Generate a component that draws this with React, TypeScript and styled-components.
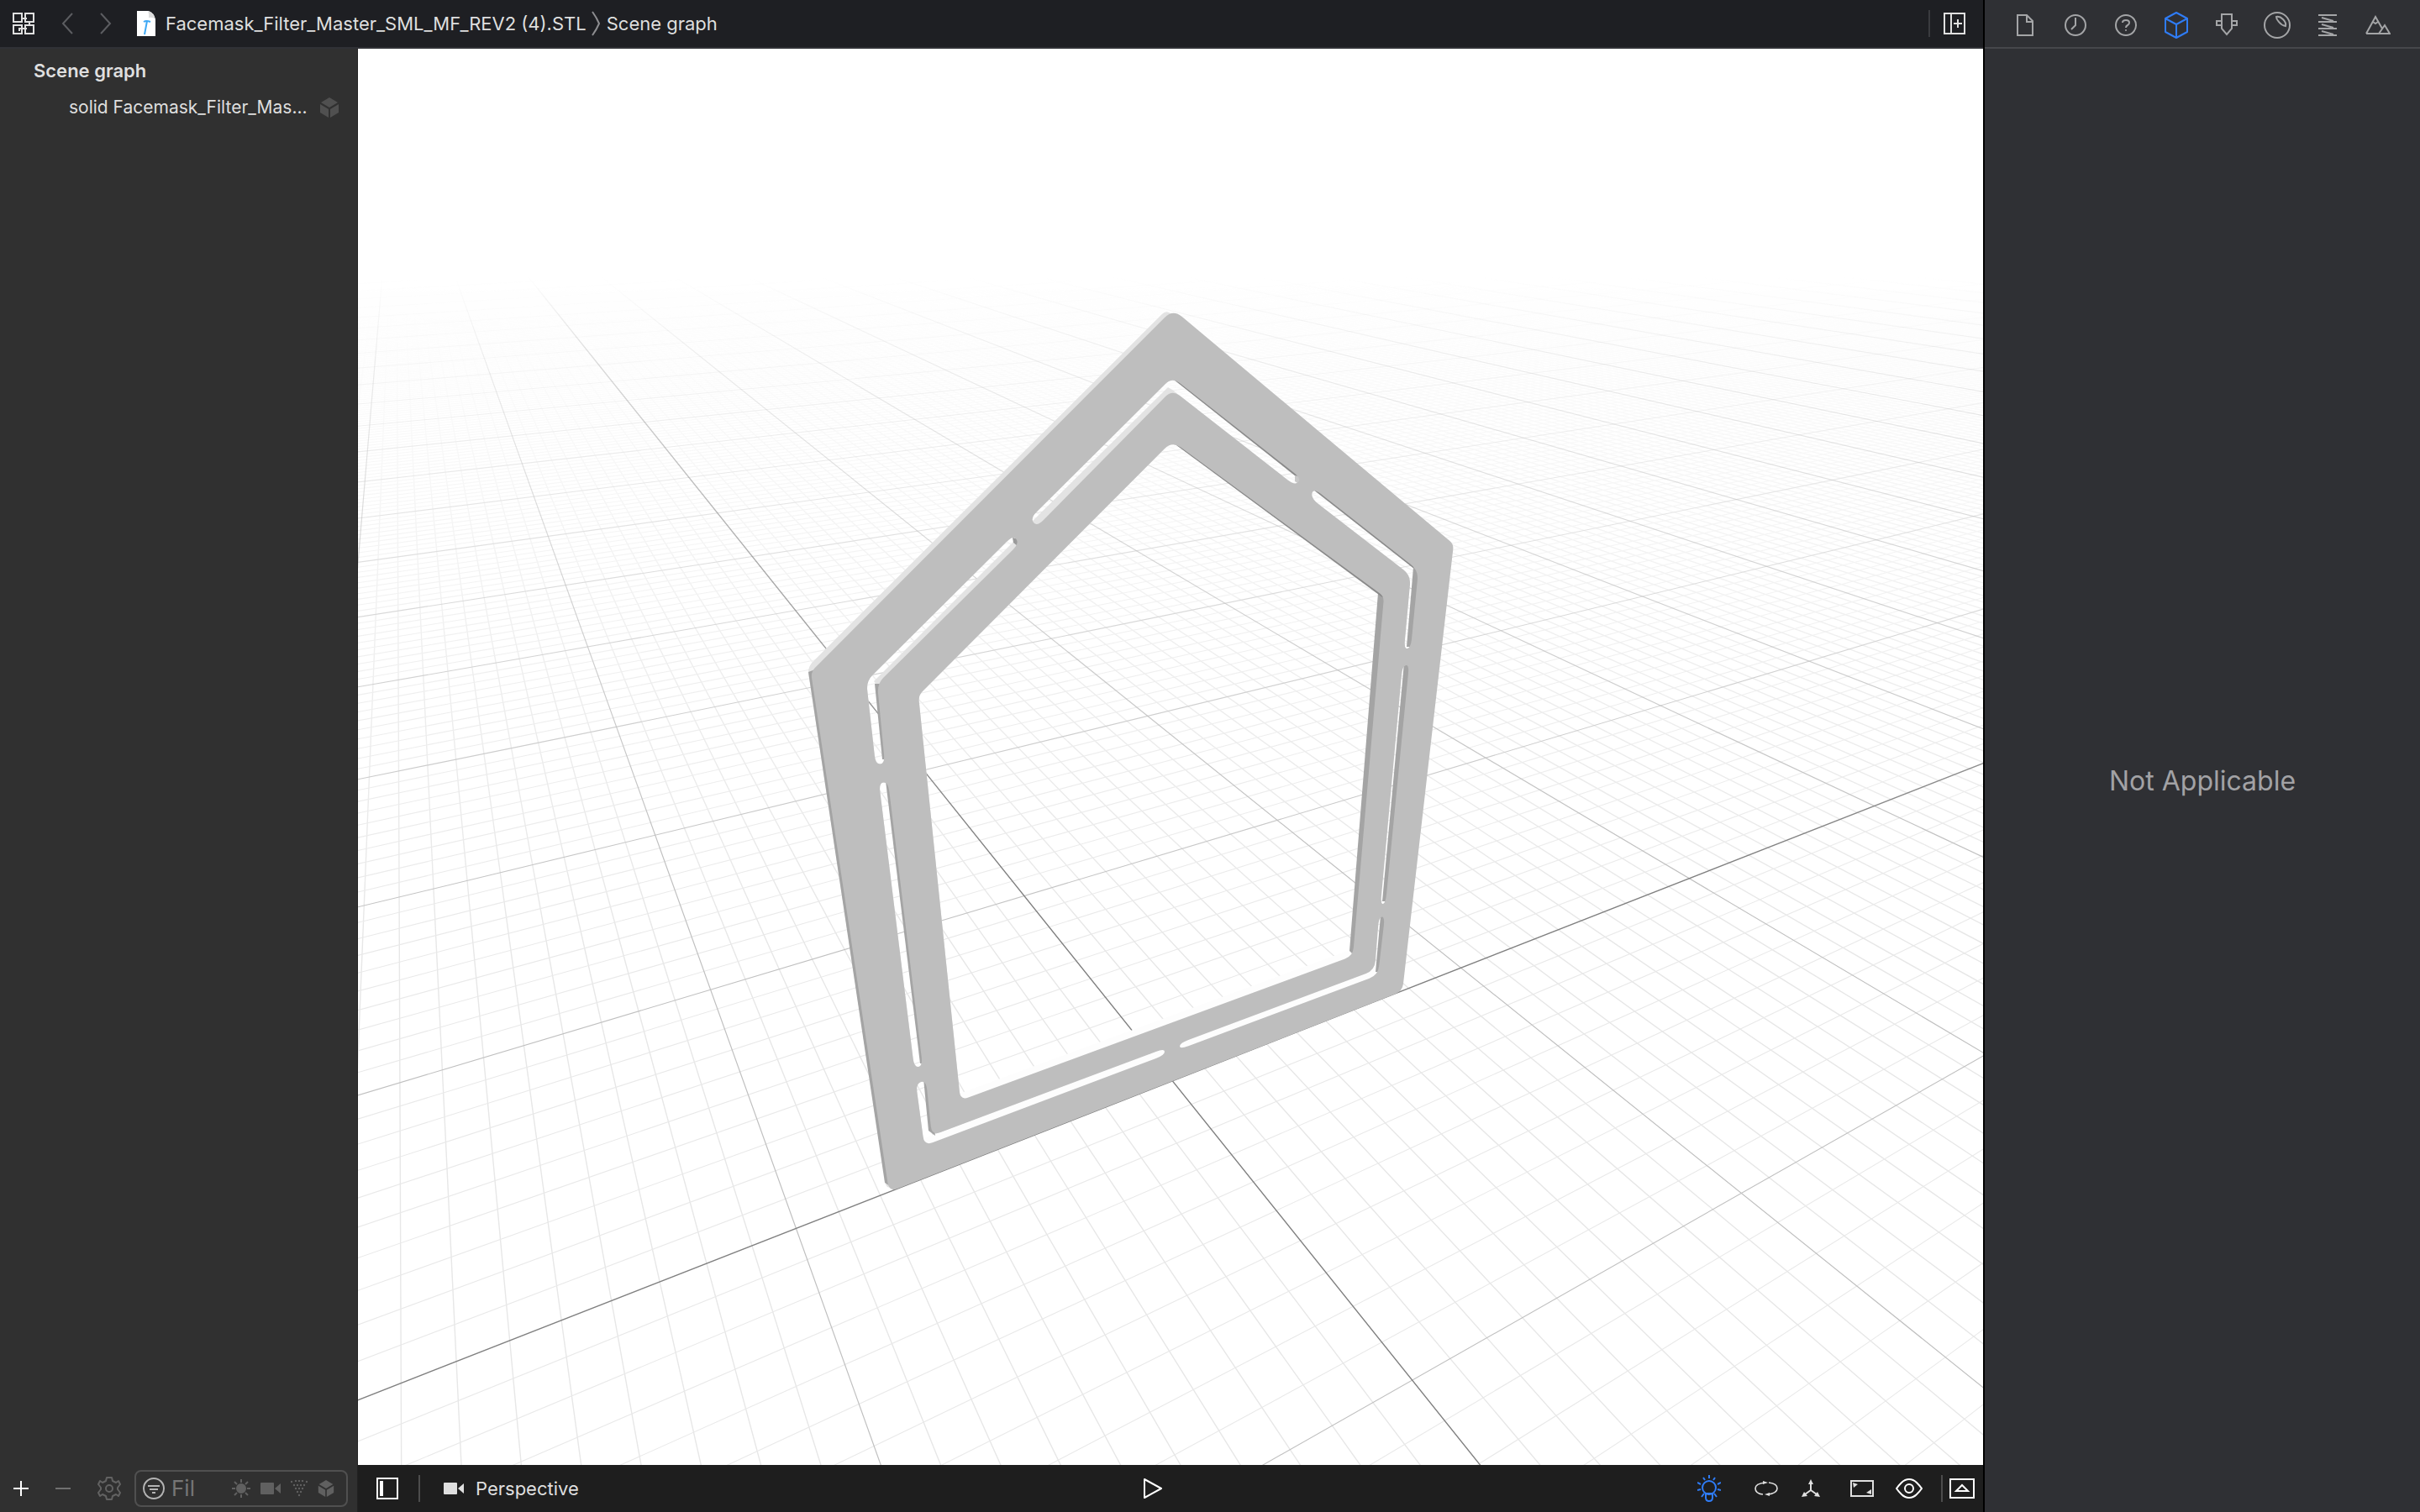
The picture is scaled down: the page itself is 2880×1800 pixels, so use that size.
import React from "react";
import styled, { createGlobalStyle } from "styled-components";

/* ---------- styles ---------- */

const GlobalStyle = createGlobalStyle`
  * { box-sizing: border-box; }
  html, body, #root { height: 100%; }
  body {
    margin: 0;
    background: #2f3034;
    color: #dfdfdf;
    font-family: Inter, "Liberation Sans", sans-serif;
    font-size: 22px;
    line-height: 32px;
  }
`;

const Shell = styled.div`
  display: flex;
  min-height: 100vh;
`;

const Editor = styled.div`
  flex: 1;
  min-width: 0;
  display: flex;
  flex-direction: column;
`;

const TopBar = styled.header`
  display: flex;
  align-items: center;
  height: 58px;
  padding: 0 21px 0 15px;
  background: #1e1f23;
  border-bottom: 2px solid #303136;
`;

const IconButton = styled.button<{ $tone?: string; $before?: number }>`
  display: flex;
  align-items: center;
  justify-content: center;
  flex: none;
  margin: 0 0 0 ${(p) => p.$before ?? 0}px;
  padding: 0;
  border: 0;
  background: none;
  color: ${(p) => p.$tone ?? "#e0e0e0"};
  cursor: pointer;
`;

const Breadcrumb = styled.nav`
  display: flex;
  align-items: center;
  gap: 6px;
  margin-left: 30px;
  flex: 1;
`;

const Crumb = styled.a`
  display: flex;
  align-items: center;
  gap: 12px;
  color: #dfdfdf;
  text-decoration: none;
  white-space: nowrap;
`;

const Divider = styled.span<{ $tone?: string }>`
  flex: none;
  width: 2px;
  height: 32px;
  background: ${(p) => p.$tone ?? "#4c4c4c"};
`;

const Workspace = styled.div`
  flex: 1;
  display: flex;
  min-height: 0;
`;

const Sidebar = styled.aside`
  width: 426px;
  flex: none;
  display: flex;
  flex-direction: column;
  background: #303030;
  border-right: 1px solid #222222;
`;

const GraphTitle = styled.h1`
  margin: 10px 0 12px 40px;
  font-size: 22px;
  line-height: 32px;
  font-weight: 600;
`;

const GraphList = styled.ul`
  flex: 1;
  margin: 0;
  padding: 0;
  list-style: none;
`;

const GraphRow = styled.li`
  display: flex;
  align-items: center;
  justify-content: space-between;
  padding: 0 22px 0 82px;
  color: #dfdfdf;
  font-size: 21px;
  white-space: nowrap;
`;

const SidebarFooter = styled.div`
  display: flex;
  align-items: center;
  height: 56px;
  padding: 0 11px 0 16px;
`;

const FilterBox = styled.label`
  display: flex;
  align-items: center;
  flex: 1;
  height: 44px;
  margin-left: 16px;
  padding: 0 14px 0 8px;
  border: 2px solid #505050;
  border-radius: 8px;
  color: #b4b4b4;
`;

const FilterInput = styled.input`
  flex: 1;
  min-width: 0;
  width: 0;
  margin: 0 0 0 8px;
  padding: 0;
  border: 0;
  outline: 0;
  background: none;
  color: #dfdfdf;
  font-family: inherit;
  font-size: 26px;
  line-height: 32px;
  &::placeholder { color: #767676; opacity: 1; }
`;

const FilterKinds = styled.span`
  display: flex;
  align-items: center;
  gap: 12px;
`;

const Viewer = styled.main`
  flex: 1;
  min-width: 0;
  display: flex;
  flex-direction: column;
`;

const Viewport = styled.div`
  flex: 1;
  min-height: 0;
  background: #ffffff;
  overflow: hidden;
`;

const SceneSvg = styled.svg`
  display: block;
  width: 100%;
  height: 100%;
`;

const ViewerBar = styled.footer`
  display: flex;
  align-items: center;
  height: 56px;
  background: #1e1e1e;
`;

const ViewerTools = styled.div`
  flex: 1;
  display: grid;
  grid-template-columns: 1fr auto 1fr;
  align-items: center;
  padding-left: 8px;
`;

const LeadTools = styled.div`
  display: flex;
  align-items: center;
  gap: 24px;
  padding-left: 14px;
`;

const CameraButton = styled.button`
  display: flex;
  align-items: center;
  gap: 14px;
  margin: 0 0 0 4px;
  padding: 0;
  border: 0;
  background: none;
  color: #dfdfdf;
  font: inherit;
  cursor: pointer;
`;

const TrailTools = styled.div`
  display: flex;
  align-items: center;
  justify-content: flex-end;
  padding-right: 22px;
`;

const DebugTools = styled.div`
  display: flex;
  align-items: center;
  gap: 8px;
  padding-right: 10px;
`;

const Inspector = styled.aside`
  width: 520px;
  flex: none;
  display: flex;
  flex-direction: column;
  background: #2f3034;
  border-left: 2px solid #000000;
`;

const InspectorTabs = styled.nav`
  display: grid;
  grid-template-columns: repeat(8, 60px);
  align-items: center;
  height: 58px;
  padding: 4px 0 0 18px;
  border-bottom: 2px solid #46474b;
`;

const EmptyState = styled.p`
  flex: 1;
  display: flex;
  align-items: center;
  justify-content: center;
  margin: 0;
  padding-top: 2px;
  color: #a2a2a5;
  font-size: 32px;
  line-height: 40px;
`;

const Glyph = styled.svg`
  display: block;
  flex: none;
  fill: none;
  stroke: currentColor;
  stroke-width: 2;
`;

/* ---------- icons ---------- */

type IconProps = { w: number; h: number; children: React.ReactNode };

const Icon = ({ w, h, children }: IconProps) => (
  <Glyph width={w} height={h} viewBox={`0 0 ${w} ${h}`} aria-hidden="true">
    {children}
  </Glyph>
);

const RelatedIcon = () => (
  <Icon w={26} h={26}>
    <path d="M1 1H11V11H1ZM15 1H25V11H15ZM1 15H11V25H1ZM15 15H25V25H15Z" />
    <path d="M11 7H17M20 10V16M9 19H17M8 18V22" />
  </Icon>
);

const BackIcon = () => (
  <Icon w={14} h={26}>
    <path d="M13 1L2 13L13 25" />
  </Icon>
);

const ForwardIcon = () => (
  <Icon w={14} h={26}>
    <path d="M1 1L12 13L1 25" />
  </Icon>
);

const FileIcon = () => (
  <Icon w={22} h={30}>
    <path d="M0 0H14Q20 2 22 10V30H0Z" fill="#ffffff" stroke="none" />
    <path d="M13 0Q15 4 14 8Q19 7 22 10Q20 2 13 0Z" fill="#dcdcdc" stroke="none" />
    <path d="M9 28L12 12M8 13Q11 11 16 13" stroke="#3fa9f5" />
  </Icon>
);

const CrumbArrow = () => (
  <Icon w={12} h={30}>
    <path d="M1 1Q6 8 9 15Q6 22 1 29" stroke="#8d8d90" />
  </Icon>
);

const AddEditorIcon = () => (
  <Icon w={26} h={26}>
    <path d="M1 1H25V25H1ZM9 1V25M12 13H22M17 8V18" />
  </Icon>
);

const DocIcon = () => (
  <Icon w={20} h={26}>
    <path d="M1 1H12L19 8V25H1ZM12 1V9H19" />
  </Icon>
);

const ClockIcon = () => (
  <Icon w={26} h={26}>
    <circle cx="13" cy="13" r="12" />
    <path d="M13 4V13L8 18" />
  </Icon>
);

const HelpIcon = () => (
  <Icon w={26} h={26}>
    <circle cx="13" cy="13" r="12" />
    <path d="M9 10Q9 7 13 7Q17 7 17 10Q17 12 15 13Q13 14 13 16" />
    <circle cx="13" cy="19" r="1" fill="currentColor" stroke="none" />
  </Icon>
);

const CubeIcon = () => (
  <Icon w={30} h={34}>
    <path d="M15 2L28 9V25L15 32L2 25V9ZM2 9L15 16L28 9M15 16V32" strokeLinejoin="round" />
  </Icon>
);

const PlugIcon = () => (
  <Icon w={26} h={28}>
    <path d="M7 1H19V18L13 25L7 18ZM7 9H1V14H7M19 9H25V14H19" />
  </Icon>
);

const SphereIcon = () => (
  <Icon w={32} h={32}>
    <circle cx="16" cy="16" r="15" />
    <path d="M15 6Q19 5 23 9Q27 13 26 17Q21 16 18 12Q15 9 15 6Z" />
  </Icon>
);

const SpringIcon = () => (
  <Icon w={22} h={26}>
    <path d="M0 1H22M4 4L18 8M0 9H22M4 12L18 16M0 17H22M4 20L18 24M0 25H22" />
  </Icon>
);

const MountainIcon = () => (
  <Icon w={30} h={24}>
    <path d="M1 22L12 2L20 16M16 22L23 12L29 22ZM1 22H18M9 8L12 10L15 8" />
  </Icon>
);

const SolidCube = ({ w, h }: { w: number; h: number }) => (
  <Glyph width={w} height={h} viewBox="0 0 22 24" aria-hidden="true">
    <g fill="currentColor" stroke="none">
      <path d="M11 0L21 6L11 12L1 6Z" />
      <path d="M0 8L10 14V24L0 18Z" />
      <path d="M22 8L12 14V24L22 18Z" />
    </g>
  </Glyph>
);

const PlusIcon = () => (
  <Icon w={18} h={18}>
    <path d="M0 9H18M9 0V18" />
  </Icon>
);

const MinusIcon = () => (
  <Icon w={18} h={18}>
    <path d="M0 9H18" />
  </Icon>
);

const GearIcon = () => (
  <Icon w={28} h={28}>
    <path
      d="M14 1H17L18 5L22 7L25 5L27 9L24 13V15L27 19L25 23L22 21L18 23L17 27H11L10 23L6 21L3 23L1 19L4 15V13L1 9L3 5L6 7L10 5L11 1Z"
      strokeLinejoin="round"
    />
    <circle cx="14" cy="14" r="4" />
  </Icon>
);

const FilterIcon = () => (
  <Icon w={26} h={26}>
    <circle cx="13" cy="13" r="12" />
    <path d="M6 10H20M8 14H18M11 18H15" />
  </Icon>
);

const SunIcon = () => (
  <Icon w={22} h={22}>
    <circle cx="11" cy="11" r="5" fill="currentColor" />
    <path d="M11 0V4M11 18V22M0 11H4M18 11H22M3 3L6 6M16 16L19 19M19 3L16 6M6 16L3 19" />
  </Icon>
);

const CameraIcon = () => (
  <Icon w={24} h={14}>
    <g fill="currentColor" stroke="none">
      <rect x="0" y="0" width="16" height="14" rx="1" />
      <path d="M17 7L24 1V13Z" />
    </g>
  </Icon>
);

const ParticlesIcon = () => (
  <Icon w={20} h={20}>
    <g fill="currentColor" stroke="none">
      {[
        [1, 2], [6, 1], [10, 1], [14, 1], [19, 2],
        [4, 6], [8, 6], [12, 6], [16, 6],
        [6, 10], [10, 10], [14, 10],
        [8, 14], [12, 14], [10, 18],
      ].map(([x, y]) => (
        <circle key={`${x}-${y}`} cx={x} cy={y} r="1.2" />
      ))}
    </g>
  </Icon>
);

const PanelIcon = () => (
  <Icon w={26} h={26}>
    <path d="M1 1H25V25H1Z" />
    <path d="M6 4V22" strokeWidth="4" />
  </Icon>
);

const PlayIcon = () => (
  <Icon w={24} h={26}>
    <path d="M2 2L22 13L2 24Z" strokeLinejoin="round" />
  </Icon>
);

const BulbIcon = () => (
  <Icon w={28} h={32}>
    <circle cx="14" cy="15" r="8" />
    <path d="M10 22V27Q10 31 14 31Q18 31 18 27V22ZM14 0V4M7 3L9 6M21 3L19 6M0 9L4 11M28 9L24 11M0 18L4 17M28 18L24 17M5 26L8 22M23 26L20 22" />
  </Icon>
);

const OrbitIcon = () => (
  <Icon w={28} h={20}>
    <g strokeWidth="1.6">
      <path d="M13 3Q1 4 1 10Q1 16 10 17M15 17Q27 16 27 10Q27 4 17 3" />
    </g>
    <path d="M10 1L16 3L10 5ZM18 15L12 17L18 19Z" fill="currentColor" stroke="none" />
  </Icon>
);

const AxesIcon = () => (
  <Icon w={22} h={22}>
    <path d="M11 4V13M11 13L4 18M11 13L18 18" />
    <path d="M11 0L14 6H8ZM0 21L3 15L7 20ZM22 21L19 15L15 20Z" fill="currentColor" stroke="none" />
  </Icon>
);

const FrameIcon = () => (
  <Icon w={28} h={20}>
    <path d="M1 1H27V19H1Z" />
    <path d="M3 3L9 5L4 9ZM25 17V11L19 15Z" fill="currentColor" stroke="none" />
  </Icon>
);

const EyeIcon = () => (
  <Icon w={32} h={24}>
    <path d="M1 12Q3 9 7 5Q11 1 16 1Q21 1 25 5Q29 9 31 12Q29 15 25 19Q21 23 16 23Q11 23 7 19Q3 15 1 12Z" />
    <circle cx="16" cy="12" r="5" />
  </Icon>
);

const DrawerIcon = () => (
  <Icon w={30} h={24}>
    <path d="M1 1H29V23H1Z" />
    <path d="M8 15L15 8L22 15Z" />
  </Icon>
);

/* ---------- 3D scene ---------- */

type Pt = [number, number];

// Ground plane: one unit is the distance between two major lines.
const project = (u: number, v: number): Pt => {
  const w = 1 + 0.1321 * u + 0.236 * v;
  return [
    (1395.3 + 573.05 * u + 111.27 * v) / w,
    (1286.8 + 17.62 * u + 31.48 * v) / w,
  ];
};

const NEAR = 0.66;
const FAR = 6;

const segment = (a: Pt, b: Pt) =>
  `M${a[0].toFixed(1)} ${a[1].toFixed(1)}L${b[0].toFixed(1)} ${b[1].toFixed(1)}`;

const lineU = (u: number) => {
  const at = (w: number) => (w - 1 - 0.1321 * u) / 0.236;
  return segment(project(u, at(NEAR)), project(u, at(FAR)));
};

const lineV = (v: number) => {
  const at = (w: number) => (w - 1 - 0.236 * v) / 0.1321;
  return segment(project(at(NEAR), v), project(at(FAR), v));
};

const lines = (from: number, to: number, major: boolean, draw: (n: number) => string) => {
  let d = "";
  for (let i = from; i <= to; i++) {
    if (i !== 0 && (i % 10 === 0) === major) d += draw(i / 10);
  }
  return d;
};

const rounded = (points: Pt[], radius: number | number[]) => {
  const n = points.length;
  let d = "";
  points.forEach((p, i) => {
    const r = typeof radius === "number" ? radius : radius[i];
    const prev = points[(i + n - 1) % n];
    const next = points[(i + 1) % n];
    const toward = (q: Pt): Pt => {
      const len = Math.hypot(q[0] - p[0], q[1] - p[1]);
      const t = Math.min(r, len / 2) / len;
      return [p[0] + (q[0] - p[0]) * t, p[1] + (q[1] - p[1]) * t];
    };
    const a = toward(prev);
    const b = toward(next);
    d += `${i ? "L" : "M"}${a[0].toFixed(1)} ${a[1].toFixed(1)}Q${p[0]} ${p[1]} ${b[0].toFixed(1)} ${b[1].toFixed(1)}`;
  });
  return d + "Z";
};

const outline: Pt[] = [[1396, 368], [1730, 648], [1669, 1180], [1058, 1419], [965, 800]];
const backOutline: Pt[] = [[1389, 368], [1500, 500], [1200, 1300], [1055, 1417], [961, 794]];
const opening: Pt[] = [[1395, 525], [1647, 710], [1610, 1138], [1143, 1310], [1093, 828]];

const slots: Pt[][] = [
  [[1226, 617], [1395, 449], [1549, 570], [1541, 578], [1395, 464], [1234, 627]],
  [[1206, 637], [1213, 647], [1044, 814], [1053, 909], [1042, 910], [1031, 811]],
  [[1046, 932], [1057, 931], [1098, 1269], [1088, 1271]],
  [[1090, 1290], [1102, 1286], [1109, 1352], [1386, 1248], [1386, 1256], [1100, 1364]],
  [[1404, 1249], [1404, 1242], [1636, 1155], [1641, 1092], [1648, 1091], [1640, 1161]],
  [[1669, 793], [1677, 791], [1649, 1075], [1643, 1077]],
  [[1563, 581], [1688, 679], [1679, 771], [1671, 773], [1679, 685], [1560, 593]],
];

const poly = (p: Pt[]) => p.map((q) => q.join(",")).join(" ");

const LIGHT = "#e3e3e3";
const SIDE = "#a4a4a4";
const UNDER = "#8a8a8a";
const TOP = "#fdfdfd";

// Thickness of the part where it shows inside the slots and the opening.
const walls: { fill: string; points: Pt[] }[] = [
  { fill: TOP, points: [[1136, 1304], [1612, 1129], [1612, 1139], [1143, 1312]] },
  { fill: SIDE, points: [[1640, 706], [1650, 706], [1612, 1138], [1606, 1132]] },
  { fill: UNDER, points: [[1397, 524], [1650, 710], [1645, 711], [1400, 530]] },
  { fill: TOP, points: [[1097, 1356], [1388, 1247], [1388, 1258], [1099, 1366]] },
  { fill: TOP, points: [[1403, 1240], [1636, 1153], [1642, 1162], [1403, 1251]] },
  { fill: LIGHT, points: [[1223, 626], [1390, 461], [1398, 466], [1234, 630]] },
  { fill: LIGHT, points: [[1040, 811], [1207, 644], [1214, 649], [1044, 816]] },
  { fill: UNDER, points: [[1397, 448], [1550, 568], [1547, 571], [1397, 452]] },
  { fill: UNDER, points: [[1563, 579], [1690, 679], [1684, 678], [1563, 583]] },
  { fill: SIDE, points: [[1682, 675], [1690, 677], [1680, 770], [1674, 770]] },
  { fill: SIDE, points: [[1671, 789], [1679, 789], [1650, 1073], [1645, 1073]] },
  { fill: SIDE, points: [[1643, 1090], [1650, 1090], [1642, 1157], [1637, 1157]] },
  { fill: SIDE, points: [[1041, 814], [1047, 814], [1055, 904], [1050, 904]] },
  { fill: SIDE, points: [[1054, 930], [1060, 930], [1099, 1266], [1095, 1266]] },
  { fill: SIDE, points: [[1099, 1284], [1104, 1284], [1113, 1352], [1105, 1346]] },
  { fill: "#9a9a9a", points: [[1205, 640], [1214, 642], [1211, 650], [1206, 646]] },
  { fill: "#c8c8c8", points: [[1541, 566], [1550, 568], [1547, 577], [1541, 573]] },
];

const Scene = () => (
  <SceneSvg viewBox="426 58 1934 1686" preserveAspectRatio="xMidYMid slice" role="img" aria-label="Facemask filter model on a grid">
    <defs>
      <linearGradient id="fadeMinor" gradientUnits="userSpaceOnUse" x1="0" y1="330" x2="0" y2="1130">
        <stop offset="0" stopColor="#000000" />
        <stop offset="0.1" stopColor="#1c1c1c" />
        <stop offset="0.3" stopColor="#5c5c5c" />
        <stop offset="0.6" stopColor="#bababa" />
        <stop offset="1" stopColor="#ffffff" />
      </linearGradient>
      <linearGradient id="fadeMajor" gradientUnits="userSpaceOnUse" x1="0" y1="330" x2="0" y2="1030">
        <stop offset="0" stopColor="#000000" />
        <stop offset="0.15" stopColor="#484848" />
        <stop offset="0.5" stopColor="#aaaaaa" />
        <stop offset="1" stopColor="#ffffff" />
      </linearGradient>
      <mask id="minorMask" maskUnits="userSpaceOnUse" x="0" y="0" width="2880" height="1800">
        <rect width="2880" height="1800" fill="url(#fadeMinor)" />
      </mask>
      <mask id="majorMask" maskUnits="userSpaceOnUse" x="0" y="0" width="2880" height="1800">
        <rect width="2880" height="1800" fill="url(#fadeMajor)" />
      </mask>
      <mask id="partMask" maskUnits="userSpaceOnUse" x="0" y="0" width="2880" height="1800">
        <rect width="2880" height="1800" fill="#ffffff" />
        <path d={[opening, ...slots].map((s) => rounded(s, 4)).join("")} fill="#000000" />
      </mask>
    </defs>
    <g fill="none" mask="url(#minorMask)">
      <path d={lines(-26, 210, false, lineU)} stroke="#e7e7e7" strokeWidth="1.4" />
      <path d={lines(-20, 230, false, lineV)} stroke="#e9e9e9" strokeWidth="1.1" />
      <path d={lines(-20, 230, true, lineV)} stroke="#c0c0c0" strokeWidth="1.1" />
    </g>
    <g fill="none" mask="url(#majorMask)">
      <path d={lines(-26, 210, true, lineU)} stroke="#c0c0c0" strokeWidth="1.2" />
      <path d={lineU(0) + lineV(0)} stroke="#808080" strokeWidth="1.4" />
    </g>
    <path d={rounded(backOutline, 9)} fill={LIGHT} mask="url(#partMask)" />
    <polygon points={poly([[962, 800], [970, 797], [1062, 1414], [1053, 1408]])} fill={SIDE} />
    {walls.map((wall, i) => (
      <polygon key={i} points={poly(wall.points)} fill={wall.fill} />
    ))}
    <path
      d={
        rounded(outline, [14, 6, 9, 11, 7]) +
        rounded(opening, [13, 6, 10, 10, 7]) +
        slots.map((s) => rounded(s, 11)).join("")
      }
      fill="#bebebe"
      fillRule="evenodd"
    />
  </SceneSvg>
);

/* ---------- page ---------- */

const inspectorTabs = [
  { label: "File", icon: <DocIcon /> },
  { label: "History", icon: <ClockIcon /> },
  { label: "Quick help", icon: <HelpIcon /> },
  { label: "Node", icon: <CubeIcon />, active: true },
  { label: "Attributes", icon: <PlugIcon /> },
  { label: "Material", icon: <SphereIcon /> },
  { label: "Physics", icon: <SpringIcon /> },
  { label: "Scene", icon: <MountainIcon /> },
];

export default function App() {
  return (
    <Shell>
      <GlobalStyle />
      <Editor>
        <TopBar>
          <IconButton aria-label="Related items"><RelatedIcon /></IconButton>
          <IconButton aria-label="Back" $tone="#5c5d61" $before={32}><BackIcon /></IconButton>
          <IconButton aria-label="Forward" $tone="#5c5d61" $before={32}><ForwardIcon /></IconButton>
          <Breadcrumb aria-label="Path">
            <Crumb href="#file">
              <FileIcon />
              Facemask_Filter_Master_SML_MF_REV2 (4).STL
            </Crumb>
            <CrumbArrow />
            <Crumb href="#scene">Scene graph</Crumb>
          </Breadcrumb>
          <Divider $tone="#3a3b3f" />
          <IconButton aria-label="Add editor" $before={16}><AddEditorIcon /></IconButton>
        </TopBar>
        <Workspace>
          <Sidebar>
            <GraphTitle>Scene graph</GraphTitle>
            <GraphList>
              <GraphRow>
                <span>solid Facemask_Filter_Mas...</span>
                <IconButton aria-label="Geometry" $tone="#505050"><SolidCube w={22} h={24} /></IconButton>
              </GraphRow>
            </GraphList>
            <SidebarFooter>
              <IconButton aria-label="Add" $tone="#ffffff"><PlusIcon /></IconButton>
              <IconButton aria-label="Remove" $tone="#707070" $before={32}><MinusIcon /></IconButton>
              <IconButton aria-label="Options" $tone="#626262" $before={32}><GearIcon /></IconButton>
              <FilterBox>
                <FilterIcon />
                <FilterInput type="text" placeholder="Fil" aria-label="Filter" />
                <FilterKinds>
                  <IconButton aria-label="Lights" $tone="#606060"><SunIcon /></IconButton>
                  <IconButton aria-label="Cameras" $tone="#606060"><CameraIcon /></IconButton>
                  <IconButton aria-label="Particles" $tone="#606060"><ParticlesIcon /></IconButton>
                  <IconButton aria-label="Geometries" $tone="#606060"><SolidCube w={20} h={20} /></IconButton>
                </FilterKinds>
              </FilterBox>
            </SidebarFooter>
          </Sidebar>
          <Viewer>
            <Viewport><Scene /></Viewport>
            <ViewerBar>
              <ViewerTools>
                <LeadTools>
                  <IconButton aria-label="Toggle scene graph" $tone="#ffffff"><PanelIcon /></IconButton>
                  <Divider />
                  <CameraButton><CameraIcon />Perspective</CameraButton>
                </LeadTools>
                <IconButton aria-label="Play" $tone="#ffffff"><PlayIcon /></IconButton>
                <TrailTools>
                  <IconButton aria-label="Lighting" $tone="#2f7cf6"><BulbIcon /></IconButton>
                  <IconButton aria-label="Orbit" $before={40}><OrbitIcon /></IconButton>
                  <IconButton aria-label="Axes" $before={28}><AxesIcon /></IconButton>
                  <IconButton aria-label="Frame" $before={36}><FrameIcon /></IconButton>
                  <IconButton aria-label="Visibility" $tone="#ffffff" $before={26}><EyeIcon /></IconButton>
                </TrailTools>
              </ViewerTools>
              <DebugTools>
                <Divider />
                <IconButton aria-label="Show timeline" $tone="#ffffff"><DrawerIcon /></IconButton>
              </DebugTools>
            </ViewerBar>
          </Viewer>
        </Workspace>
      </Editor>
      <Inspector>
        <InspectorTabs aria-label="Inspectors">
          {inspectorTabs.map((tab) => (
            <IconButton key={tab.label} aria-label={tab.label} $tone={tab.active ? "#2f7cf6" : "#a4a5a7"}>
              {tab.icon}
            </IconButton>
          ))}
        </InspectorTabs>
        <EmptyState>Not Applicable</EmptyState>
      </Inspector>
    </Shell>
  );
}
